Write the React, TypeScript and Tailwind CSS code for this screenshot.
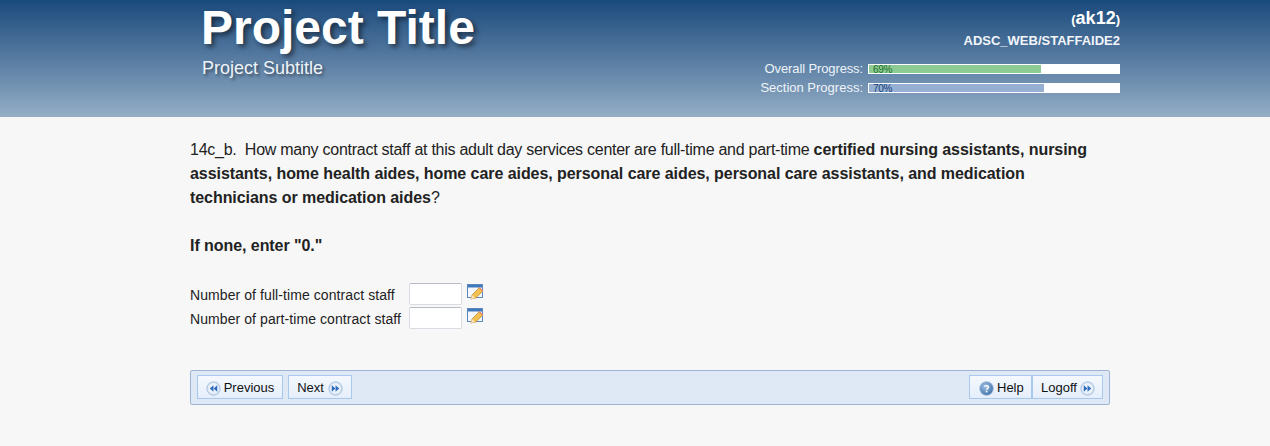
import React from 'react';

function SeekIcon({ dir }: { dir: 'back' | 'forward' }) {
  const flip = dir === 'back' ? 'rotate(180 8 8)' : undefined;
  return (
    <svg width="15" height="15" viewBox="0 0 16 16" className="shrink-0">
      <defs>
        <radialGradient id={`seek-${dir}`} cx="50%" cy="50%" r="55%">
          <stop offset="0%" stopColor="#ffffff" />
          <stop offset="70%" stopColor="#e4edf8" />
          <stop offset="100%" stopColor="#9db9de" />
        </radialGradient>
      </defs>
      <circle cx="8" cy="8" r="7.2" fill={`url(#seek-${dir})`} stroke="#a9c0de" strokeWidth="0.8" />
      <g transform={flip} fill="#2f6cc0">
        <path d="M4 4.5 L8 8 L4 11.5 Z" />
        <path d="M8 4.5 L12 8 L8 11.5 Z" />
      </g>
    </svg>
  );
}

function HelpIcon() {
  return (
    <svg width="15" height="15" viewBox="0 0 16 16" className="shrink-0">
      <defs>
        <radialGradient id="help-ball" cx="40%" cy="35%" r="70%">
          <stop offset="0%" stopColor="#9fc0e4" />
          <stop offset="100%" stopColor="#3d6fa8" />
        </radialGradient>
      </defs>
      <circle cx="8" cy="8" r="7.4" fill="url(#help-ball)" stroke="#bcd0e6" strokeWidth="0.8" />
      <path d="M5.9 6.2 C6 4.7 10.1 4.5 10.1 6.6 C10.1 8 8.1 8 8.1 9.4" fill="none" stroke="#fff" strokeWidth="1.6" />
      <rect x="7.2" y="10.4" width="1.8" height="1.7" fill="#fff" />
    </svg>
  );
}

function CalcIcon() {
  return (
    <svg width="17" height="16" viewBox="0 0 17 16" className="shrink-0">
      <rect x="0.5" y="0.5" width="15" height="13" fill="#f4f8fd" stroke="#5a88bd" />
      <rect x="1" y="1" width="14" height="2.5" fill="#3f78bd" />
      <path d="M4 15 L5 11 L12.5 3.5 L16 7 L8.5 14.2 Z" fill="#f2c14e" stroke="#b9812a" strokeWidth="0.7" />
      <path d="M11.8 4.2 L12.8 3.2 L16.3 6.7 L15.3 7.7 Z" fill="#e98f6f" />
      <path d="M4 15 L5 11 L8.5 14.2 Z" fill="#f7e3bd" />
    </svg>
  );
}

function ProgressRow({ label, labelClass, pct, fillWidth, fill, text }: { label: string; labelClass: string; pct: number; fillWidth: number; fill: string; text: string }) {
  return (
    <div className="flex items-center justify-end h-[10px]">
      <span className={`text-[13px] text-[#eef3f8] mr-[5px] whitespace-nowrap ${labelClass}`}>{label}</span>
      <div className="relative w-[252px] h-[10px] bg-white">
        <div className={`h-full ${fill} border-l border-y border-white`} style={{ width: `${fillWidth}px` }} />
        <span className={`absolute left-[5px] top-0 text-[10px] leading-[11px] tracking-[-0.3px] ${text}`}>{pct}%</span>
      </div>
    </div>
  );
}

function FieldRow({ label }: { label: string }) {
  return (
    <div className="flex items-center h-[24px]">
      <span className="w-[219px] text-[14px] tracking-[0.08px] text-[#222222] pt-[2px]">{label}</span>
      <div className="w-[53px] h-[22px] bg-white border border-[#d8dbe2] rounded-[2px] border-t-[#b9bcc6]" />
      <span className="ml-[5px] -mt-[4px]"><CalcIcon /></span>
    </div>
  );
}

function NavButton({ children }: { children: React.ReactNode }) {
  return (
    <button className="flex items-center h-[24px] pt-[2px] bg-gradient-to-b from-[#f5f9fe] to-[#e4eefa] border border-[#a9c8ee] text-[13px] text-[#111111]">
      {children}
    </button>
  );
}

export default function App() {
  return (
    <div className="min-h-[446px] bg-[#f7f7f7] font-['Liberation_Sans',Arial,sans-serif]">
      <header className="h-[117px] bg-gradient-to-b from-[#194a7c] to-[#94aec6] pl-[202px] pr-[150px] flex justify-between">
        <div>
          <h1 className="-ml-px text-[48px] leading-[55px] font-bold text-white [text-shadow:3px_3px_5px_rgba(0,0,0,0.5)]">Project Title</h1>
          <p className="text-[18px] leading-[18px] mt-[4px] text-[#eef3f8] [text-shadow:2px_2px_3px_rgba(0,0,0,0.45)]">Project Subtitle</p>
        </div>
        <div className="flex flex-col items-end">
          <div className="mt-[8px] h-[20px] leading-[20px] text-white font-bold text-[18px]">
            <span className="text-[13px]">(</span>ak12<span className="text-[13px]">)</span>
          </div>
          <div className="mt-[4px] h-[18px] leading-[18px] text-[#f2f5f9] font-bold text-[13px]">ADSC_WEB/STAFFAIDE2</div>
          <div className="mt-[14px] flex flex-col gap-[9px] w-full">
            <ProgressRow label="Overall Progress:" labelClass="tracking-[-0.12px]" pct={69} fillWidth={173} fill="bg-[#8ecb94]" text="text-[#1a6f28]" />
            <ProgressRow label="Section Progress:" labelClass="tracking-normal" pct={70} fillWidth={176} fill="bg-[#95b0d3]" text="text-[#173f75]" />
          </div>
        </div>
      </header>

      <main className="ml-[190px] w-[920px] pt-[21px] text-[#222222]">
        <p className="text-[16px] leading-[24px] tracking-[-0.26px]">
          14c_b.&nbsp; How many contract staff at this adult day services center are full-time and part-time{' '}
          <b className="tracking-[-0.06px]">certified nursing assistants, nursing assistants, home health aides, home care aides, personal care aides, personal care assistants, and medication technicians or medication aides</b>?
        </p>
        <p className="text-[16px] leading-[24px] font-bold tracking-[-0.06px] mt-[24px]">If none, enter "0."</p>

        <div className="mt-[24px]">
          <FieldRow label="Number of full-time contract staff" />
          <FieldRow label="Number of part-time contract staff" />
        </div>

        <nav className="mt-[40px] h-[35px] flex items-start justify-between px-[6px] pt-[4px] bg-[#dfe9f5] border border-[#9fb4d4] rounded-[2px]">
          <div className="flex gap-[5px]">
            <NavButton>
              <span className="flex items-center justify-center gap-[3px] w-[84px]"><SeekIcon dir="back" />Previous</span>
            </NavButton>
            <NavButton>
              <span className="flex items-center justify-center gap-[4px] w-[62px]">Next<SeekIcon dir="forward" /></span>
            </NavButton>
          </div>
          <div className="flex">
            <NavButton>
              <span className="flex items-center gap-[3px] w-[61px] pl-[9px]"><HelpIcon />Help</span>
            </NavButton>
            <NavButton>
              <span className="flex items-center gap-[3px] w-[69px] pl-[8px]">Logoff<SeekIcon dir="forward" /></span>
            </NavButton>
          </div>
        </nav>
      </main>
    </div>
  );
}
